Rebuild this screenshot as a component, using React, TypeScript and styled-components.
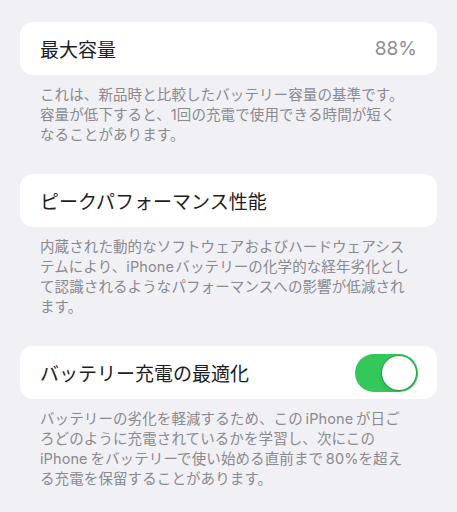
import React from "react";
import styled, { createGlobalStyle } from "styled-components";

const Global = createGlobalStyle`
  html, body {
    margin: 0;
    padding: 0;
    background: #f1f0f5;
  }
  body {
    font-family: "Inter", "Noto Sans CJK JP", sans-serif;
    -webkit-font-smoothing: antialiased;
  }
`;

const Page = styled.div`
  width: 457px;
  min-height: 512px;
  box-sizing: border-box;
  padding: 22px 20px 0;
  background: #f1f0f5;
  display: flex;
  flex-direction: column;
  gap: 29px;
`;

const Section = styled.section`
  display: flex;
  flex-direction: column;
  gap: 10px;
`;

const Card = styled.div`
  height: 53px;
  box-sizing: border-box;
  background: #ffffff;
  border-radius: 13px;
  padding: 0 19px 0 20px;
  display: flex;
  align-items: center;
  justify-content: space-between;
`;

const Title = styled.span`
  font-family: "Inter", "Noto Sans CJK JP", sans-serif;
  font-size: 19px;
  color: #1d1d1f;
  letter-spacing: 0;
`;

const Value = styled.span`
  font-family: "Inter", "Noto Sans CJK JP", sans-serif;
  font-size: 19px;
  color: #8e8e93;
  margin-right: 1px;
`;

const Footer = styled.p`
  margin: 0;
  padding: 0 20px;
  font-family: "Inter", "Noto Sans CJK JP", sans-serif;
  font-size: 14.5px;
  letter-spacing: 0.1px;
  line-height: 20px;
  color: #8a8a8e;
  white-space: nowrap;
`;

const Track = styled.div<{ $on: boolean }>`
  width: 63px;
  height: 38px;
  border-radius: 19px;
  background: ${(p) => (p.$on ? "#34c759" : "#e9e9ea")};
  display: flex;
  align-items: center;
  justify-content: ${(p) => (p.$on ? "flex-end" : "flex-start")};
  padding: 0 2px;
  box-sizing: border-box;
`;

const Knob = styled.div`
  width: 34px;
  height: 34px;
  border-radius: 50%;
  background: #ffffff;
  box-shadow: 0 0 0 1px rgba(30, 110, 50, 0.35), 0 2px 4px rgba(0, 0, 0, 0.12);
`;

const Toggle = ({ on }: { on: boolean }) => (
  <Track $on={on}>
    <Knob />
  </Track>
);

export default function App() {
  return (
    <>
      <Global />
      <Page>
        <Section>
          <Card>
            <Title>最大容量</Title>
            <Value>88%</Value>
          </Card>
          <Footer>
            これは、新品時と比較したバッテリー容量の基準です。
            <br />
            容量が低下すると、1回の充電で使用できる時間が短く
            <br />
            なることがあります。
          </Footer>
        </Section>
        <Section>
          <Card>
            <Title>ピークパフォーマンス性能</Title>
          </Card>
          <Footer>
            内蔵された動的なソフトウェアおよびハードウェアシス
            <br />
            テムにより、iPhone&#8202;バッテリーの化学的な経年劣化とし
            <br />
            て認識されるようなパフォーマンスへの影響が低減され
            <br />
            ます。
          </Footer>
        </Section>
        <Section>
          <Card>
            <Title>バッテリー充電の最適化</Title>
            <Toggle on />
          </Card>
          <Footer>
            バッテリーの劣化を軽減するため、この&#8201;iPhone&#8201;が日ご
            <br />
            ろどのように充電されているかを学習し、次にこの
            <br />
            iPhone&#8201;をバッテリーで使い始める直前まで&#8201;80%を超え
            <br />
            る充電を保留することがあります。
          </Footer>
        </Section>
      </Page>
    </>
  );
}
